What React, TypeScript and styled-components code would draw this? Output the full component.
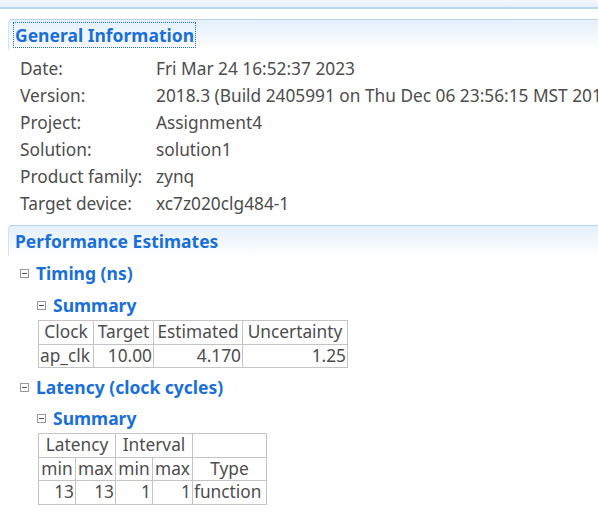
import React from "react";
import styled, { createGlobalStyle } from "styled-components";

const Global = createGlobalStyle`
  html, body { margin: 0; padding: 0; background: #ffffff; }
  body { font-family: "Noto Sans", "Open Sans", sans-serif; color: #4d4d4d; overflow: hidden; }
`;

const Page = styled.div`
  width: 598px;
  height: 513px;
  overflow: hidden;
`;

const TopStrip = styled.div`
  height: 7px;
  background: linear-gradient(#f3f7fc, #e6eff9);
  border-bottom: 2px solid #b9d6f3;
`;

const Section = styled.section<{ $top: number }>`
  margin: ${(p) => p.$top}px 0 0 8px;
`;

const SectionHeader = styled.div`
  height: 30px;
  border-top: 1px solid #b8d3ee;
  border-left: 1px solid #d3e3f3;
  border-top-left-radius: 4px;
  background: linear-gradient(#e3effa, #ffffff);
  display: flex;
  align-items: center;
  padding-left: 6px;
`;

const SectionTitle = styled.span<{ $focused?: boolean }>`
  font-size: 17.5px;
  font-weight: 700;
  color: #1a6fd8;
  outline: ${(p) => (p.$focused ? "1px dotted #1a6fd8" : "none")};
  outline-offset: 1px;
  line-height: 22px;
`;

const InfoGrid = styled.div`
  display: grid;
  grid-template-columns: 136px auto;
  grid-auto-rows: 27px;
  padding: 5px 0 0 12px;
  font-size: 17.3px;
  align-items: center;
  white-space: nowrap;
`;

const SubHeading = styled.div<{ $indent: number; $top: number }>`
  display: flex;
  align-items: center;
  gap: 7px;
  margin: ${(p) => p.$top}px 0 0 ${(p) => p.$indent}px;
  height: 22px;
  font-size: 17.5px;
  font-weight: 700;
  color: #1a6fd8;
`;

const Toggle = styled.span`
  box-sizing: border-box;
  width: 9px;
  height: 9px;
  border: 1px solid #9a9a9a;
  position: relative;
  flex: none;
  background: #fff;
  &::after {
    content: "";
    position: absolute;
    left: 1px;
    right: 1px;
    top: 3px;
    height: 1px;
    background: #555;
  }
`;

const Table = styled.table<{ $top: number }>`
  margin: ${(p) => p.$top}px 0 0 38px;
  border-collapse: collapse;
  table-layout: fixed;
  font-size: 17.3px;
  color: #4d4d4d;
`;

const Cell = styled.td<{ $w?: number; $align?: string }>`
  border: 1px solid #c4c4c4;
  height: 22.5px;
  padding: 0 1px;
  white-space: nowrap;
  overflow: hidden;
  text-align: ${(p) => p.$align || "right"};
  ${(p) => (p.$w ? `width: ${p.$w}px;` : "")}
  line-height: 22px;
`;

const info: [string, string][] = [
  ["Date:", "Fri Mar 24 16:52:37 2023"],
  ["Version:", "2018.3 (Build 2405991 on Thu Dec 06 23:56:15 MST 2018)"],
  ["Project:", "Assignment4"],
  ["Solution:", "solution1"],
  ["Product family:", "zynq"],
  ["Target device:", "xc7z020clg484-1"],
];

export default function App() {
  return (
    <Page>
      <Global />
      <TopStrip />
      <Section $top={10}>
        <SectionHeader>
          <SectionTitle $focused>General Information</SectionTitle>
        </SectionHeader>
        <InfoGrid>
          {info.map(([k, v]) => (
            <React.Fragment key={k}>
              <span>{k}</span>
              <span>{v}</span>
            </React.Fragment>
          ))}
        </InfoGrid>
      </Section>
      <Section $top={8}>
        <SectionHeader>
          <SectionTitle>Performance Estimates</SectionTitle>
        </SectionHeader>
      </Section>
      <SubHeading $indent={20} $top={6}>
        <Toggle />
        Timing (ns)
      </SubHeading>
      <SubHeading $indent={37} $top={10}>
        <Toggle />
        Summary
      </SubHeading>
      <Table $top={4}>
        <tbody>
          <tr>
            <Cell $w={52} $align="center">Clock</Cell>
            <Cell $w={57} $align="center">Target</Cell>
            <Cell $w={86} $align="center">Estimated</Cell>
            <Cell $w={102} $align="center">Uncertainty</Cell>
          </tr>
          <tr>
            <Cell $align="left">ap_clk</Cell>
            <Cell>10.00</Cell>
            <Cell>4.170</Cell>
            <Cell>1.25</Cell>
          </tr>
        </tbody>
      </Table>
      <SubHeading $indent={20} $top={8}>
        <Toggle />
        Latency (clock cycles)
      </SubHeading>
      <SubHeading $indent={37} $top={9}>
        <Toggle />
        Summary
      </SubHeading>
      <Table $top={4}>
        <tbody>
          <tr>
            <Cell colSpan={2} $align="center">Latency</Cell>
            <Cell colSpan={2} $align="center">Interval</Cell>
            <Cell />
          </tr>
          <tr>
            <Cell $w={34} $align="center">min</Cell>
            <Cell $w={37} $align="center">max</Cell>
            <Cell $w={34} $align="center">min</Cell>
            <Cell $w={37} $align="center">max</Cell>
            <Cell $w={71} $align="center">Type</Cell>
          </tr>
          <tr>
            <Cell>13</Cell>
            <Cell>13</Cell>
            <Cell>1</Cell>
            <Cell>1</Cell>
            <Cell $align="left">function</Cell>
          </tr>
        </tbody>
      </Table>
      <SubHeading $indent={37} $top={4}>
        <Toggle />
        Detail
      </SubHeading>
    </Page>
  );
}
